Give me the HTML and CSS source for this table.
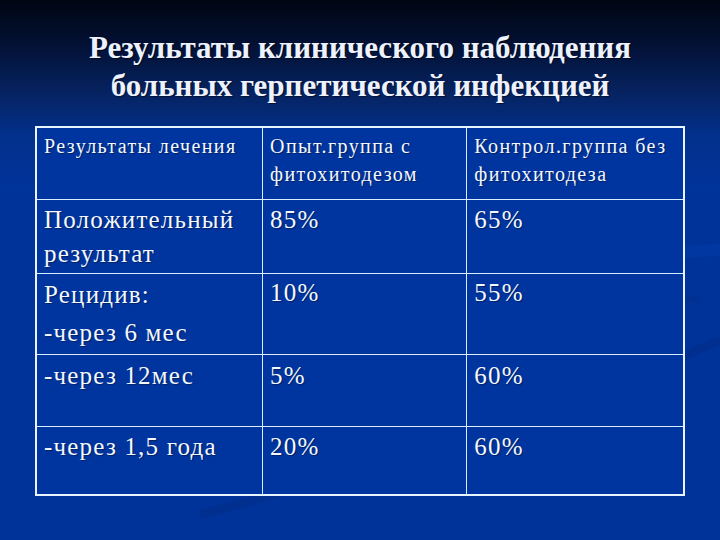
FILE: index.html
```html
<!DOCTYPE html>
<html lang="ru">
<head>
<meta charset="utf-8">
<link rel="stylesheet" href="styles.css">
</head>
<body>
<div class="slide">
  <svg class="swirl" width="720" height="540" viewBox="0 0 720 540">
    <path d="M200 515 C 360 470, 540 420, 720 340" fill="none" stroke="#002a80" stroke-width="9" opacity="0.4"/>
    <path d="M420 360 C 440 300, 560 280, 700 300" fill="none" stroke="#002a80" stroke-width="7" opacity="0.3"/>
    <path d="M560 330 C 600 260, 680 250, 720 250" fill="none" stroke="#0040b0" stroke-width="12" opacity="0.35"/>
  </svg>
  <h1 class="title">Результаты клинического наблюдения<br>больных герпетической инфекцией</h1>
  <table class="results">
    <colgroup>
      <col class="c1"><col class="c2"><col class="c3">
    </colgroup>
    <tr class="head">
      <td>Результаты лечения</td>
      <td>Опыт.группа с фитохитодезом</td>
      <td>Контрол.группа без фитохитодеза</td>
    </tr>
    <tr class="r1">
      <td>Положительный результат</td>
      <td>85%</td>
      <td>65%</td>
    </tr>
    <tr class="r2">
      <td class="tall">Рецидив:<br>-через 6 мес</td>
      <td>10%</td>
      <td>55%</td>
    </tr>
    <tr class="r3">
      <td>-через 12мес</td>
      <td>5%</td>
      <td>60%</td>
    </tr>
    <tr class="r4">
      <td>-через 1,5 года</td>
      <td>20%</td>
      <td>60%</td>
    </tr>
  </table>
</div>
</body>
</html>
```

FILE: styles.css
```css
html, body {
  margin: 0;
  padding: 0;
}
body {
  width: 720px;
  height: 540px;
  overflow: hidden;
}
.slide {
  position: relative;
  width: 720px;
  height: 540px;
  background: linear-gradient(to bottom, #000612 0px, #020f30 40px, #06225e 90px, #02308c 135px, #003399 190px, #003399 540px);
  font-family: "Liberation Serif", "Times New Roman", serif;
  color: #f4f8ff;
  overflow: hidden;
}
.swirl {
  position: absolute;
  left: 0;
  top: 0;
}
.title {
  position: relative;
  margin: 0;
  padding-top: 29px;
  height: 97px;
  font-size: 31px;
  line-height: 38px;
  font-weight: bold;
  text-align: center;
  color: #eef2ff;
  text-shadow: 1px 1px 1px rgba(0, 0, 0, 0.5);
}
.results {
  position: relative;
  margin-left: 35px;
  width: 650px;
  border-collapse: collapse;
  border: 2px solid #e8f4ff;
  background: #00349e;
}
.c1 { width: 227px; }
.c2 { width: 205px; }
.c3 { width: 218px; }
.results td {
  border: 1px solid #d8ecff;
  vertical-align: top;
  padding: 3px 4px 0 7px;
  font-size: 25px;
  line-height: 34px;
  letter-spacing: 1.2px;
  text-shadow: 1px 1px 1px rgba(0, 0, 0, 0.35);
}
.results .head td {
  font-size: 20px;
  line-height: 28px;
  letter-spacing: 1.4px;
  padding-top: 4px;
}
.head { height: 72px; }
.r1 { height: 74px; }
.r2 { height: 81px; }
.r2 td { padding-top: 2px; }
.r2 .tall { line-height: 38px; }
.r3 { height: 72px; }
.r3 td { padding-top: 4px; }
.r4 { height: 69px; }
.r4 td { padding-top: 3px; }
```
